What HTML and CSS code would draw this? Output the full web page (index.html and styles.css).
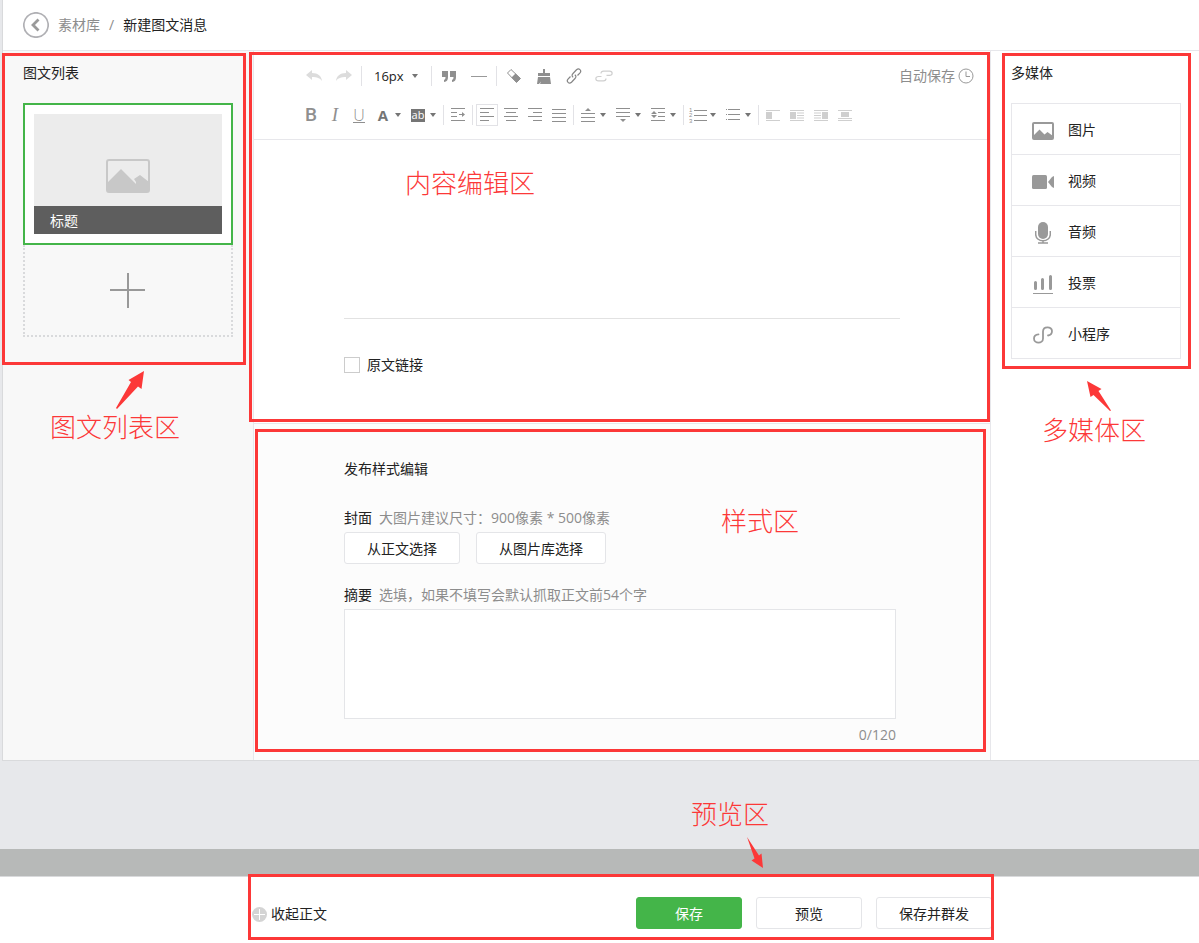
FILE: index.html
```html
<!DOCTYPE html>
<html lang="zh-CN">
<head>
<meta charset="utf-8">
<meta name="viewport" content="width=device-width, initial-scale=1">
<title>新建图文消息</title>
<link rel="stylesheet" href="styles.css">
</head>
<body>
<div class="page">
  <header class="crumbs">
    <a class="back" href="#" aria-label="返回">
      <svg width="26" height="26" viewBox="0 0 26 26" fill="none"><circle cx="13" cy="13" r="12.2" stroke="#b0b0b4" stroke-width="1.7"/><path d="M15.500 7.500 10 13l5.500 5.500" stroke="#9a9a9a" stroke-width="2.800"/></svg>
    </a>
    <a class="crumb" href="#">素材库</a>
    <span class="slash">/</span>
    <h1 class="current">新建图文消息</h1>
  </header>

  <div class="workspace">
    <aside class="articles">
      <section class="article-list">
        <h2 class="heading">图文列表</h2>
        <a class="card" href="#">
          <span class="thumb">
            <svg class="thumb-icon" width="44" height="34" viewBox="0 0 44 34"><rect x="1" y="1" width="42" height="32" rx="2" fill="none" stroke="#c8c8c8" stroke-width="2"/><path d="M1 24 15 10l14 14 1 1v-2l-2-3 6-4 9 7v10H1z" fill="#c8c8c8"/></svg>
            <span class="thumb-title">标题</span>
          </span>
        </a>
        <button class="add" type="button" aria-label="添加图文">
          <svg width="36" height="36" viewBox="0 0 36 36"><path d="M0 18h35M18 1v35" stroke="#999" stroke-width="2"/></svg>
        </button>
        <div class="frame frame-list"></div>
      </section>
      <svg class="arrow arrow-list" width="28" height="38" viewBox="0 0 28 38"><path d="M28 0 25.500 18 22 15.500 1 38 0 37 15 11 12.500 9z" fill="#fc3838"/></svg>
      <p class="note note-list">图文列表区</p>
    </aside>

    <main class="editor">
      <section class="compose">
        <div class="toolbar">
          <div class="tools tools-top">
            <button class="tool" type="button" aria-label="撤销"><svg width="16" height="12" viewBox="0 0 16 12"><path d="M0 5 6 0v3c6 0 9.500 3 10 8-2-3-5-4-10-4v3z" fill="#dcdcdc"/></svg></button>
            <button class="tool" type="button" aria-label="重做"><svg width="16" height="12" viewBox="0 0 16 12"><path d="M16 5 10 0v3C4 3 .5 6 0 11c2-3 5-4 10-4v3z" fill="#dcdcdc"/></svg></button>
            <span class="sep"></span>
            <button class="size" type="button">16px<span class="caret"></span></button>
            <span class="sep"></span>
            <button class="tool" type="button" aria-label="引用"><svg width="14" height="11" viewBox="0 0 14 11"><path d="M0 0h6v6c0 3-1 4.500-4 5V9c1-.5 1.500-1 1.500-3H0zM8 0h6v6c0 3-1 4.500-4 5V9c1-.5 1.500-1 1.500-3H8z" fill="#8f8f8f"/></svg></button>
            <button class="tool" type="button" aria-label="分隔线"><svg width="16" height="12" viewBox="0 0 16 12"><path d="M0 6.500h16" stroke="#999"/></svg></button>
            <span class="sep"></span>
            <button class="tool" type="button" aria-label="清除格式"><svg width="16" height="16" viewBox="0 0 16 16"><path d="m5 1.500 9.500 9-4 4-9-9.500z" fill="#fff" stroke="#8f8f8f"/><path d="m9.500 5.500 5 5-4 4-5-5z" fill="#8f8f8f"/></svg></button>
            <button class="tool" type="button" aria-label="格式刷"><svg width="14" height="15" viewBox="0 0 14 15"><path d="M6 0h2v4h5v3H1V4h5zM1 8h12l1 7H3l1-2.500L2 15H0z" fill="#8f8f8f"/></svg></button>
            <button class="tool" type="button" aria-label="超链接"><svg width="16" height="16" viewBox="0 0 16 16" fill="none" stroke="#858585" stroke-width="1.200"><path d="M7.200 9.200C5.500 8 6 6.500 7 5.500l3.500-3.700c2.500-2.300 5.500.7 3.500 3L11.500 7.500M8.800 6.800c1.700 1.200 1.200 2.700.2 3.700l-3.500 3.700c-2.500 2.300-5.500-.7-3.500-3l2.500-2.700"/></svg></button>
            <button class="tool" type="button" aria-label="取消链接"><svg width="18" height="12" viewBox="0 0 18 12" fill="none" stroke="#cfcfcf" stroke-width="1.200"><path d="M6 3.500C6 2 7 1.200 8.500 1.200h6c3.500 0 3.500 4.200 0 4.200h-3M6.500 6.500h-3c-3.500 0-3.500 4.300 0 4.300h5c1.500 0 2.500-1 2.500-2.300"/></svg></button>
            <span class="autosave">自动保存<svg width="16" height="16" viewBox="0 0 16 16" fill="none" stroke="#999"><circle cx="8" cy="8" r="7"/><path d="M8 3.500v5h4"/></svg></span>
          </div>
          <div class="tools">
            <button class="tool bold" type="button" aria-label="加粗">B</button>
            <button class="tool italic" type="button" aria-label="斜体">I</button>
            <button class="tool underline" type="button" aria-label="下划线"><span class="underline-letter">U</span></button>
            <button class="drop color" type="button" aria-label="字体颜色"><span class="glyph">A</span><span class="caret"></span></button>
            <button class="drop" type="button" aria-label="背景色"><span class="glyph"><span class="swatch">ab</span></span><span class="caret"></span></button>
            <span class="sep"></span>
            <button class="tool" type="button" aria-label="首行缩进"><svg width="16" height="14" viewBox="0 0 16 14" stroke="#8f8f8f"><path d="M1 .5h14M1 4.500h6M1 8.500h6M1 12.500h14M9 6.500h4"/><path d="m12 4 3 2.500L12 9z" fill="#8f8f8f" stroke="none"/></svg></button>
            <span class="sep"></span>
            <button class="tool active" type="button" aria-label="左对齐"><svg width="14" height="14" viewBox="0 0 14 14" stroke="#8f8f8f"><path d="M0 .5h14M0 4.500h9M0 8.500h14M0 12.500h9"/></svg></button>
            <button class="tool" type="button" aria-label="居中"><svg width="14" height="14" viewBox="0 0 14 14" stroke="#8f8f8f"><path d="M0 .5h14M2 4.500h10M0 8.500h14M2 12.500h10"/></svg></button>
            <button class="tool" type="button" aria-label="右对齐"><svg width="14" height="14" viewBox="0 0 14 14" stroke="#8f8f8f"><path d="M0 .5h14M5 4.500h9M0 8.500h14M5 12.500h9"/></svg></button>
            <button class="tool" type="button" aria-label="两端对齐"><svg width="14" height="14" viewBox="0 0 14 14" stroke="#8f8f8f"><path d="M0 1.500h14M0 5.500h14M0 9.500h14M0 13.500h14"/></svg></button>
            <span class="sep"></span>
            <button class="drop" type="button" aria-label="段前距"><span class="glyph"><svg width="14" height="14" viewBox="0 0 14 14" stroke="#8f8f8f"><path d="M0 5.500h14M0 9.500h14M0 13.500h14"/><path d="m7 0 3 3H4z" fill="#8f8f8f" stroke="none"/></svg></span><span class="caret"></span></button>
            <button class="drop" type="button" aria-label="段后距"><span class="glyph"><svg width="14" height="14" viewBox="0 0 14 14" stroke="#8f8f8f"><path d="M0 .5h14M0 4.500h14M0 8.500h14"/><path d="m7 14 3-3H4z" fill="#8f8f8f" stroke="none"/></svg></span><span class="caret"></span></button>
            <button class="drop" type="button" aria-label="行间距"><span class="glyph"><svg width="14" height="14" viewBox="0 0 14 14" stroke="#8f8f8f"><path d="M0 .5h14M7 4.500h7M7 8.500h7M0 12.500h14"/><path d="m3 3 3 3H0zM3 10l3-3H0z" fill="#8f8f8f" stroke="none"/></svg></span><span class="caret"></span></button>
            <span class="sep"></span>
            <button class="drop" type="button" aria-label="有序列表"><span class="glyph"><svg class="ordered" width="18" height="16" viewBox="0 0 18 16"><path d="M5 3.500h13M5 8.500h13M5 13.500h13" stroke="#8f8f8f"/><text x="0" y="5">1</text><text x="0" y="10">2</text><text x="0" y="16">3</text></svg></span><span class="caret"></span></button>
            <button class="drop" type="button" aria-label="无序列表"><span class="glyph"><svg width="14" height="12" viewBox="0 0 14 12" stroke="#8f8f8f"><path d="M0 .5h1M2 .5h12M0 5.500h1M2 5.500h12M0 10.500h1M2 10.500h12"/></svg></span><span class="caret"></span></button>
            <span class="sep"></span>
            <button class="tool" type="button" aria-label="左浮动"><svg width="14" height="11" viewBox="0 0 14 11"><path d="M0 .5h14M0 10.500h14" stroke="#cfcfcf"/><path d="M0 2h6v7H0z" fill="#cfcfcf"/></svg></button>
            <button class="tool" type="button" aria-label="左环绕"><svg width="14" height="11" viewBox="0 0 14 11"><path d="M0 .5h14M7 3h7M7 5.500h7M7 8h7M0 10.500h14" stroke="#cfcfcf"/><path d="M0 2h6v7H0z" fill="#cfcfcf"/></svg></button>
            <button class="tool" type="button" aria-label="右环绕"><svg width="14" height="11" viewBox="0 0 14 11"><path d="M0 .5h14M0 3h7M0 5.500h7M0 8h7M0 10.500h14" stroke="#cfcfcf"/><path d="M8 2h6v7H8z" fill="#cfcfcf"/></svg></button>
            <button class="tool" type="button" aria-label="居中图片"><svg width="14" height="11" viewBox="0 0 14 11"><path d="M0 .5h14M0 8.500h14M0 10.500h14" stroke="#cfcfcf"/><path d="M3 2h8v5H3z" fill="#cfcfcf"/></svg></button>
          </div>
        </div>
        <div class="compose-body">
          <div class="writing" role="textbox" aria-label="正文" contenteditable="true"></div>
          <label class="source"><input class="check" type="checkbox">原文链接</label>
        </div>
        <div class="frame frame-compose"></div>
        <p class="note note-compose">内容编辑区</p>
      </section>

      <section class="publish">
        <h2 class="heading">发布样式编辑</h2>
        <p class="field-name">封面<span class="hint">大图片建议尺寸：900像素 * 500像素</span></p>
        <div class="choices">
          <button class="btn" type="button">从正文选择</button>
          <button class="btn" type="button">从图片库选择</button>
        </div>
        <label class="field-name" for="summary">摘要<span class="hint">选填，如果不填写会默认抓取正文前54个字</span></label>
        <textarea class="summary" id="summary"></textarea>
        <p class="counter">0/120</p>
        <div class="frame frame-publish"></div>
        <p class="note note-publish">样式区</p>
      </section>
    </main>

    <aside class="side">
      <section class="media">
        <h2 class="heading">多媒体</h2>
        <ul class="media-list">
          <li><button class="media-item" type="button"><span class="media-icon"><svg width="22" height="18" viewBox="0 0 22 18"><rect x="1" y="1" width="20" height="16" rx="1" fill="none" stroke="#999" stroke-width="2"/><path d="M1 14 7.500 7.500l5 5 3-2.500 5.500 4v3H1z" fill="#999"/></svg></span>图片</button></li>
          <li><button class="media-item" type="button"><span class="media-icon"><svg width="22" height="14" viewBox="0 0 22 14" fill="#999"><rect width="15" height="14" rx="1.500"/><path d="m16 7 4-5 2-1v12l-2-1z"/></svg></span>视频</button></li>
          <li><button class="media-item" type="button"><span class="media-icon"><svg width="16" height="22" viewBox="0 0 16 22"><rect x="3" width="10" height="17" rx="5" fill="#999"/><path d="M.7 9v3.500a7.300 6.300 0 0 0 14.600 0V9M8 18.500V21M3 21h10" fill="none" stroke="#999" stroke-width="1.500"/></svg></span>音频</button></li>
          <li><button class="media-item" type="button"><span class="media-icon"><svg width="20" height="19" viewBox="0 0 20 19" stroke="#999"><path d="M2.500 7.500v6M9.500 4.500v9M17.500 1.500v12" stroke-width="3" stroke-linecap="round"/><path d="M0 18.500h20"/></svg></span>投票</button></li>
          <li><button class="media-item" type="button"><span class="media-icon"><svg width="20" height="18" viewBox="0 0 20 18" fill="none" stroke="#999" stroke-width="1.800" stroke-linecap="round"><path d="M5.500 8.300C2.500 8.500 1 10.500 1 12.500c0 5.500 9 5.500 9 0v-7C10 0 19 0 19 5c0 2.500-1.500 4.200-4 4.500"/></svg></span>小程序</button></li>
        </ul>
        <div class="frame frame-media"></div>
      </section>
      <svg class="arrow arrow-media" width="24" height="30" viewBox="0 0 24 30"><path d="M0 0 14.500 8 11.500 10 24 29.500 23 30 6.500 14 3.500 16z" fill="#fc3838"/></svg>
      <p class="note note-media">多媒体区</p>
    </aside>
  </div>
</div>

<div class="gutter">
  <p class="note note-preview">预览区</p>
  <svg class="arrow arrow-preview" width="16" height="31" viewBox="0 0 16 31"><path d="M0 0 12 18.500 14.500 16.500 16 31 4.500 23.500 7.500 21.500z" fill="#fc3838"/></svg>
</div>
<div class="band"></div>

<footer class="actions">
  <button class="collapse" type="button"><svg width="15" height="15" viewBox="0 0 15 15"><circle cx="7.500" cy="7.500" r="7.500" fill="#d4d4d4"/><path d="M2 7.500h11M7.500 2v11" stroke="#fff"/></svg>收起正文</button>
  <div class="action-buttons">
    <button class="btn wide primary" type="button">保存</button>
    <button class="btn wide" type="button">预览</button>
    <button class="btn" type="button">保存并群发</button>
  </div>
  <div class="frame frame-actions"></div>
</footer>
</body>
</html>
```
FILE: styles.css
```css
* { box-sizing: border-box; }

body {
  margin: 0;
  min-height: 100vh;
  display: flex;
  flex-direction: column;
  background: #e7e8eb;
  color: #222;
  font: 14px/20px "Open Sans", "Noto Sans CJK SC", sans-serif;
}

h1, h2, p, ul { margin: 0; padding: 0; font: inherit; }
ul { list-style: none; }
a { color: inherit; text-decoration: none; }
svg { display: block; flex: none; }
button { margin: 0; padding: 0; border: 0; background: none; color: inherit; font: inherit; cursor: pointer; }

.page { margin-left: 2px; border: solid #d9dadc; border-width: 0 0 1px 1px; background: #fff; }

.crumbs {
  display: flex;
  align-items: center;
  height: 51px;
  padding-left: 20px;
  border-bottom: 1px solid #e7e7eb;
}
.crumb { margin-left: 9px; color: #8d8d8d; }
.slash { margin: 0 9px; color: #8d8d8d; }

.workspace { display: grid; grid-template-columns: 250px minmax(0, 1fr) 208px; }

.heading { margin-bottom: 20px; }

/* Article list */
.articles { position: relative; background: #f8f8f8; }
.article-list { position: relative; padding: 12px 20px 28px; }
.card { display: block; padding: 9px; border: 2px solid #44b549; background: #fff; }
.thumb {
  display: flex;
  flex-direction: column;
  align-items: center;
  justify-content: flex-end;
  gap: 13px;
  height: 120px;
  background: #ececec;
}
.thumb-title { width: 100%; padding: 5px 16px 3px; background: #5e5e5e; color: #fff; }
.add {
  display: flex;
  align-items: center;
  justify-content: center;
  width: 100%;
  height: 92px;
  border: 2px dotted #d9dadc;
  border-top: 0;
}

/* Compose */
.editor { position: relative; border: solid #e7e7eb; border-width: 0 1px; }
.compose { position: relative; border-bottom: 1px solid #e7e7eb; }
.toolbar {
  display: grid;
  gap: 17px;
  padding: 14px 16px 13px 45px;
  border-bottom: 1px solid #e7e7eb;
}
.tools { display: flex; align-items: center; height: 22px; }
.tool { display: flex; align-items: center; justify-content: center; flex: none; width: 24px; height: 22px; color: #8f8f8f; }
.tools-top .tool { width: 30px; }
.tool.active { width: 22px; margin: 0 1px; border: 1px solid #e2e2e6; }
.bold { font: 500 19px/22px Roboto, sans-serif; }
.italic { font: italic 19px/22px "Liberation Serif", serif; }
.underline { font: 300 16px/14px "Open Sans", sans-serif; }
.underline-letter { border-bottom: 1px solid #8f8f8f; }
.drop { display: flex; align-items: center; flex: none; width: 35px; height: 22px; }
.glyph { display: flex; align-items: center; justify-content: center; width: 24px; }
.color { color: #757575; font: bold 15px/22px "Open Sans", sans-serif; }
.swatch { width: 14px; height: 13px; background: #757575; color: #fff; font-size: 11px; line-height: 12px; }
.ordered { fill: #8f8f8f; font: 6px "Liberation Sans", sans-serif; }
.caret { width: 6px; border: 3px solid transparent; border-top: 4px solid #757575; border-bottom: 0; }
.sep { flex: none; width: 1px; height: 20px; margin: 0 2px; background: #e2e2e6; }
.size { display: flex; align-items: center; justify-content: space-between; flex: none; width: 65px; padding: 0 11px 0 10px; font-size: 13px; }
.autosave { display: flex; align-items: center; gap: 3px; margin-left: auto; color: #8d8d8d; }

.compose-body { padding: 0 90px 48px; }
.writing { min-height: 179px; border-bottom: 1px solid #e2e2e2; outline: 0; }
.source { display: flex; align-items: center; gap: 7px; margin-top: 36px; }
.check { appearance: none; width: 16px; height: 16px; margin: 0; border: 1px solid #ccc; background: #fff; }

/* Publish settings */
.publish { position: relative; padding: 35px 94px 15px 90px; background: #fcfcfc; }
.publish .heading { margin-bottom: 29px; }
.field-name { display: block; margin-bottom: 4px; }
.hint { margin-left: 7px; color: #8d8d8d; }
.choices { display: flex; gap: 16px; margin-bottom: 21px; }
.btn { padding: 6px 22px 4px; border: 1px solid #e4e5e8; border-radius: 3px; background: #fff; white-space: nowrap; }
.summary { display: block; width: 100%; height: 110px; padding: 8px; border: 1px solid #e4e5e8; background: #fff; font: inherit; resize: none; }
.counter { margin-top: 6px; color: #8d8d8d; text-align: right; }

/* Media */
.side { position: relative; }
.media { position: relative; padding: 12px 18px 10px 20px; }
.media-list { border: 1px solid #e7e7eb; }
.media-item { display: flex; align-items: center; width: 100%; height: 50px; padding: 2px 0 0 20px; }
.media-list li + li { border-top: 1px solid #e7e7eb; }
.media-icon { display: flex; justify-content: center; width: 22px; margin-right: 14px; padding-top: 2px; }

/* Bottom bar */
.gutter { position: relative; height: 88px; }
.band { height: 27px; background: #b7b9b8; }
.actions {
  position: relative;
  display: flex;
  flex: 1;
  align-items: flex-start;
  justify-content: space-between;
  padding: 20px 207px 14px 252px;
  border-top: 1px solid #d9dadc;
  background: #fff;
}
.collapse { display: flex; align-items: center; gap: 4px; padding: 7px 0 5px; }
.action-buttons { display: flex; gap: 14px; }
.wide { width: 106px; }
.primary { border-color: #44b549; background: #44b549; color: #fff; }

/* Callouts drawn over the interface */
.frame { position: absolute; border: 3px solid #fc3838; pointer-events: none; }
.frame-list { inset: 2px 7px 0 -1px; }
.frame-compose { inset: 1px 0 1px -5px; }
.frame-publish { inset: 5px 4px 8px 1px; }
.frame-media { inset: 2px 8px 0 11px; }
.frame-actions { inset: -3px 205px 3px 248px; }
.note { position: absolute; color: #fc3838; font: 300 26px/32px "Noto Sans CJK SC", sans-serif; white-space: nowrap; }
.note-list { top: 359px; left: 47px; }
.note-compose { top: 115px; left: 151px; }
.note-publish { top: 80px; left: 467px; }
.note-media { top: 362px; left: 51px; }
.note-preview { top: 36px; left: 691px; }
.arrow { position: absolute; }
.arrow-list { top: 320px; left: 113px; }
.arrow-media { top: 330px; left: 96px; }
.arrow-preview { top: 76px; left: 747px; }
```
